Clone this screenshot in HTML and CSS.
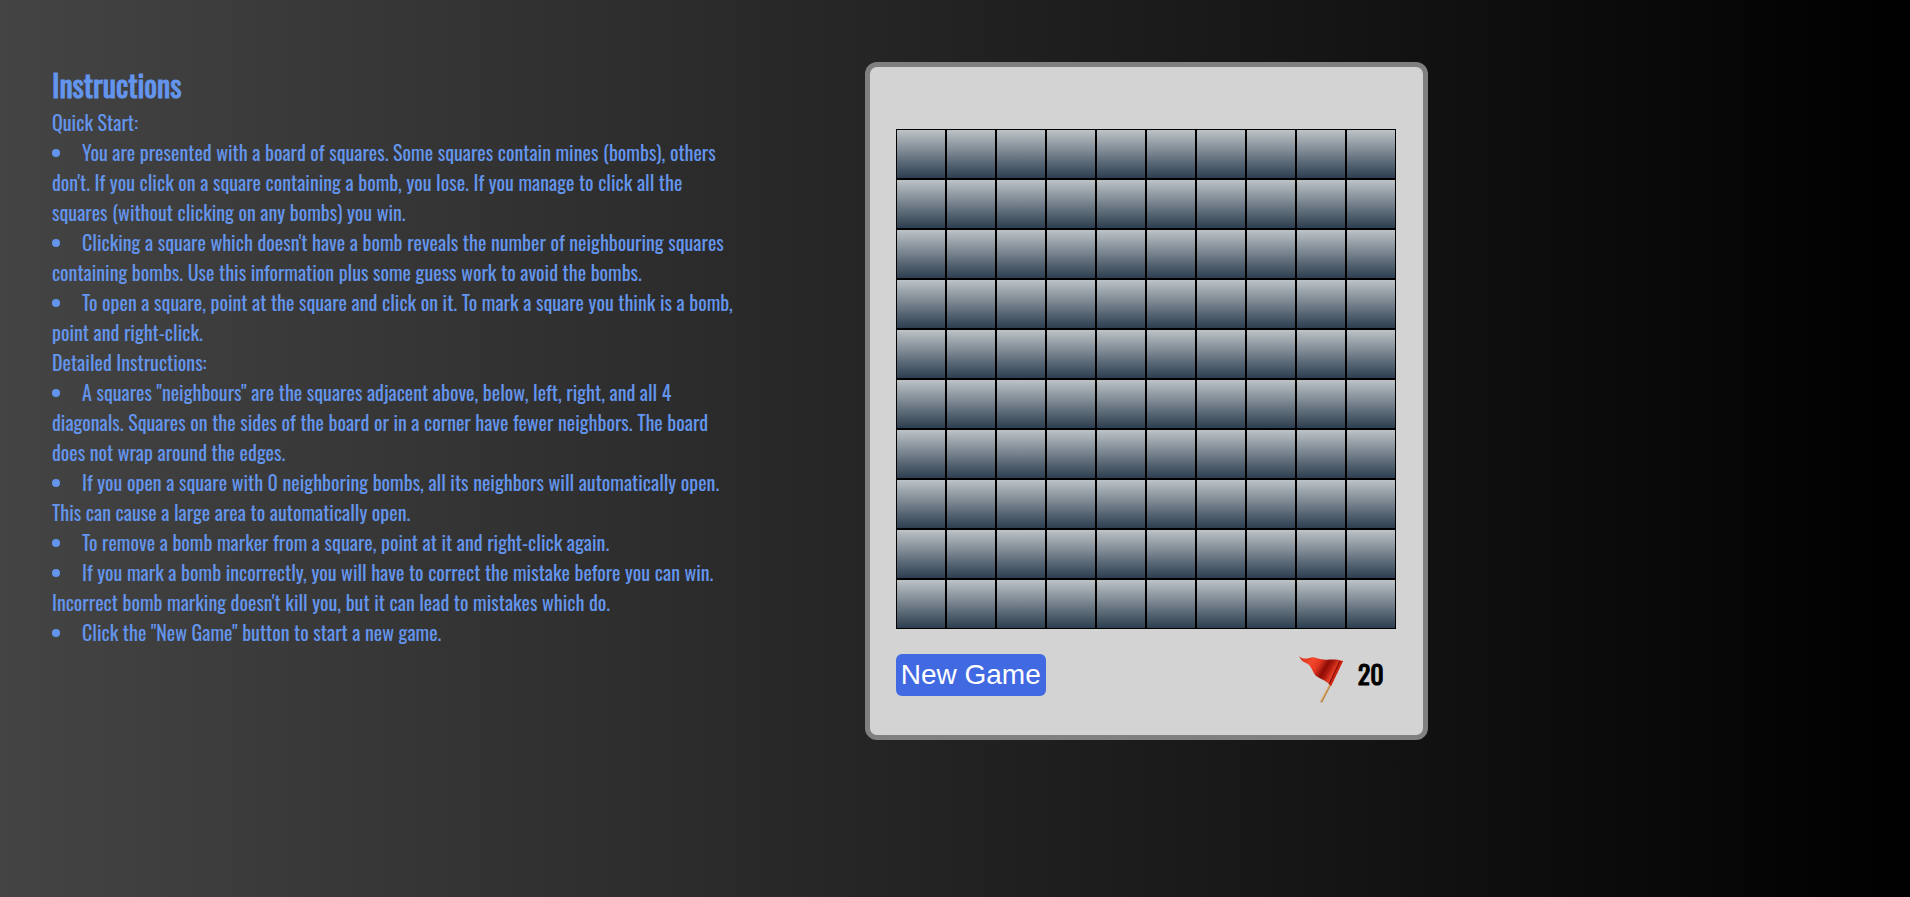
FILE: index.html
```html
<!DOCTYPE html>
<html lang="en">
<head>
<meta charset="utf-8">
<title>Minesweeper</title>
<link rel="stylesheet" href="styles.css">
</head>
<body>
<main class="page">
  <section class="instructions">
    <h1 class="title">Instructions</h1>
    <p class="lead">Quick Start:</p>
    <ul class="rules">
      <li>You are presented with a board of squares. Some squares contain mines (bombs), others<br>don't. If you click on a square containing a bomb, you lose. If you manage to click all the<br>squares (without clicking on any bombs) you win.</li>
      <li>Clicking a square which doesn't have a bomb reveals the number of neighbouring squares<br>containing bombs. Use this information plus some guess work to avoid the bombs.</li>
      <li>To open a square, point at the square and click on it. To mark a square you think is a bomb,<br>point and right-click.</li>
    </ul>
    <p class="lead">Detailed Instructions:</p>
    <ul class="rules">
      <li>A squares "neighbours" are the squares adjacent above, below, left, right, and all 4<br>diagonals. Squares on the sides of the board or in a corner have fewer neighbors. The board<br>does not wrap around the edges.</li>
      <li>If you open a square with 0 neighboring bombs, all its neighbors will automatically open.<br>This can cause a large area to automatically open.</li>
      <li>To remove a bomb marker from a square, point at it and right-click again.</li>
      <li>If you mark a bomb incorrectly, you will have to correct the mistake before you can win.<br>Incorrect bomb marking doesn't kill you, but it can lead to mistakes which do.</li>
      <li>Click the "New Game" button to start a new game.</li>
    </ul>
  </section>
  <section class="game">
    <div class="board" id="board"></div>
    <div class="controls">
      <button class="new-game" type="button">New Game</button>
      <div class="counter">
        <svg class="flag" viewBox="2 -1 46 50" aria-hidden="true">
          <defs>
            <linearGradient id="cloth" x1="0" y1="0.2" x2="1" y2="0.6">
              <stop offset="0" stop-color="#d8321c"/>
              <stop offset="0.25" stop-color="#f4482c"/>
              <stop offset="0.42" stop-color="#e03420"/>
              <stop offset="0.58" stop-color="#8c0c06"/>
              <stop offset="0.68" stop-color="#b01a0e"/>
              <stop offset="0.82" stop-color="#f0482c"/>
              <stop offset="1" stop-color="#b41c10"/>
            </linearGradient>
          </defs>
          <path d="M34 30 L25.500 46.500" stroke="#b07c40" stroke-width="2" stroke-linecap="round"/>
          <path d="M33.500 30 L25 46" stroke="#ecb878" stroke-width="1"/>
          <path d="M3 1 C6 4 9 4 13 3 C18 1 20 3 24 4 C31 6 38 3 47 6 L35 31 C31 26 25 24 20 21 C17 18 16 13 13 10 C10 7 6 8 3 1 Z" fill="url(#cloth)"/>
          <path d="M43 6 L47 6 L35 31 L33 29 Z" fill="#cc2414"/>
          <path d="M44 6 L33 29" stroke="#760a06" stroke-width="1"/>
        </svg>
        <output class="count">20</output>
      </div>
    </div>
  </section>
</main>
<script src="board.js"></script>
</body>
</html>
```
FILE: styles.css
```css
* {
  box-sizing: border-box;
}

body {
  margin: 0;
  min-height: 100vh;
  background: linear-gradient(to right, #444, #000);
  font-family: Oswald, "Liberation Sans Narrow", "Open Sans Condensed", "Roboto Condensed", "Liberation Sans", sans-serif;
}

.page {
  display: flex;
  align-items: flex-start;
  padding: 62px 52px;
}

.instructions {
  flex: 0 0 45%;
  color: cornflowerblue;
  font-size: 20px;
  line-height: 30px;
  white-space: nowrap;
}

.title {
  margin: 0;
  font-size: 30px;
  font-weight: 400;
  line-height: 45px;
  -webkit-text-stroke: 1px cornflowerblue;
}

.lead {
  margin: 0;
}

.rules {
  margin: 0;
  padding: 0;
  list-style: none;
}

.rules li::before {
  content: "";
  display: inline-block;
  width: 8px;
  height: 8px;
  margin-right: 22px;
  margin-bottom: 4px;
  border-radius: 50%;
  background: cornflowerblue;
  vertical-align: middle;
}

.game {
  padding: 62px 27px 31px 26px;
  border: 5px solid gray;
  border-radius: 12px;
  background: lightgray;
}

.board {
  display: grid;
  grid-template-columns: repeat(10, 50px);
  grid-auto-rows: 50px;
}

.square {
  padding: 0;
  border: 1px solid #000;
  border-radius: 0;
  background: linear-gradient(#bdc3c7, #2c3e50);
}

.controls {
  display: flex;
  justify-content: space-between;
  align-items: flex-start;
  padding-top: 25px;
}

.new-game {
  padding: 5px;
  border: 0;
  border-radius: 6px;
  background: royalblue;
  color: #fff;
  font: 28px/32px "Liberation Sans", Arial, sans-serif;
}

.counter {
  display: flex;
  align-items: flex-start;
  gap: 14px;
  padding-right: 12px;
}

.flag {
  width: 46px;
  height: 50px;
  fill: none;
}

.count {
  font-size: 26px;
  font-weight: 400;
  line-height: 40px;
  -webkit-text-stroke: 1px #000;
}
```
FILE: board.js
```js
const board = document.getElementById("board");
for (let i = 0; i < 100; i++) {
  const square = document.createElement("button");
  square.type = "button";
  square.className = "square";
  square.setAttribute("aria-label", `Row ${Math.floor(i / 10) + 1}, column ${i % 10 + 1}`);
  board.append(square);
}
```
